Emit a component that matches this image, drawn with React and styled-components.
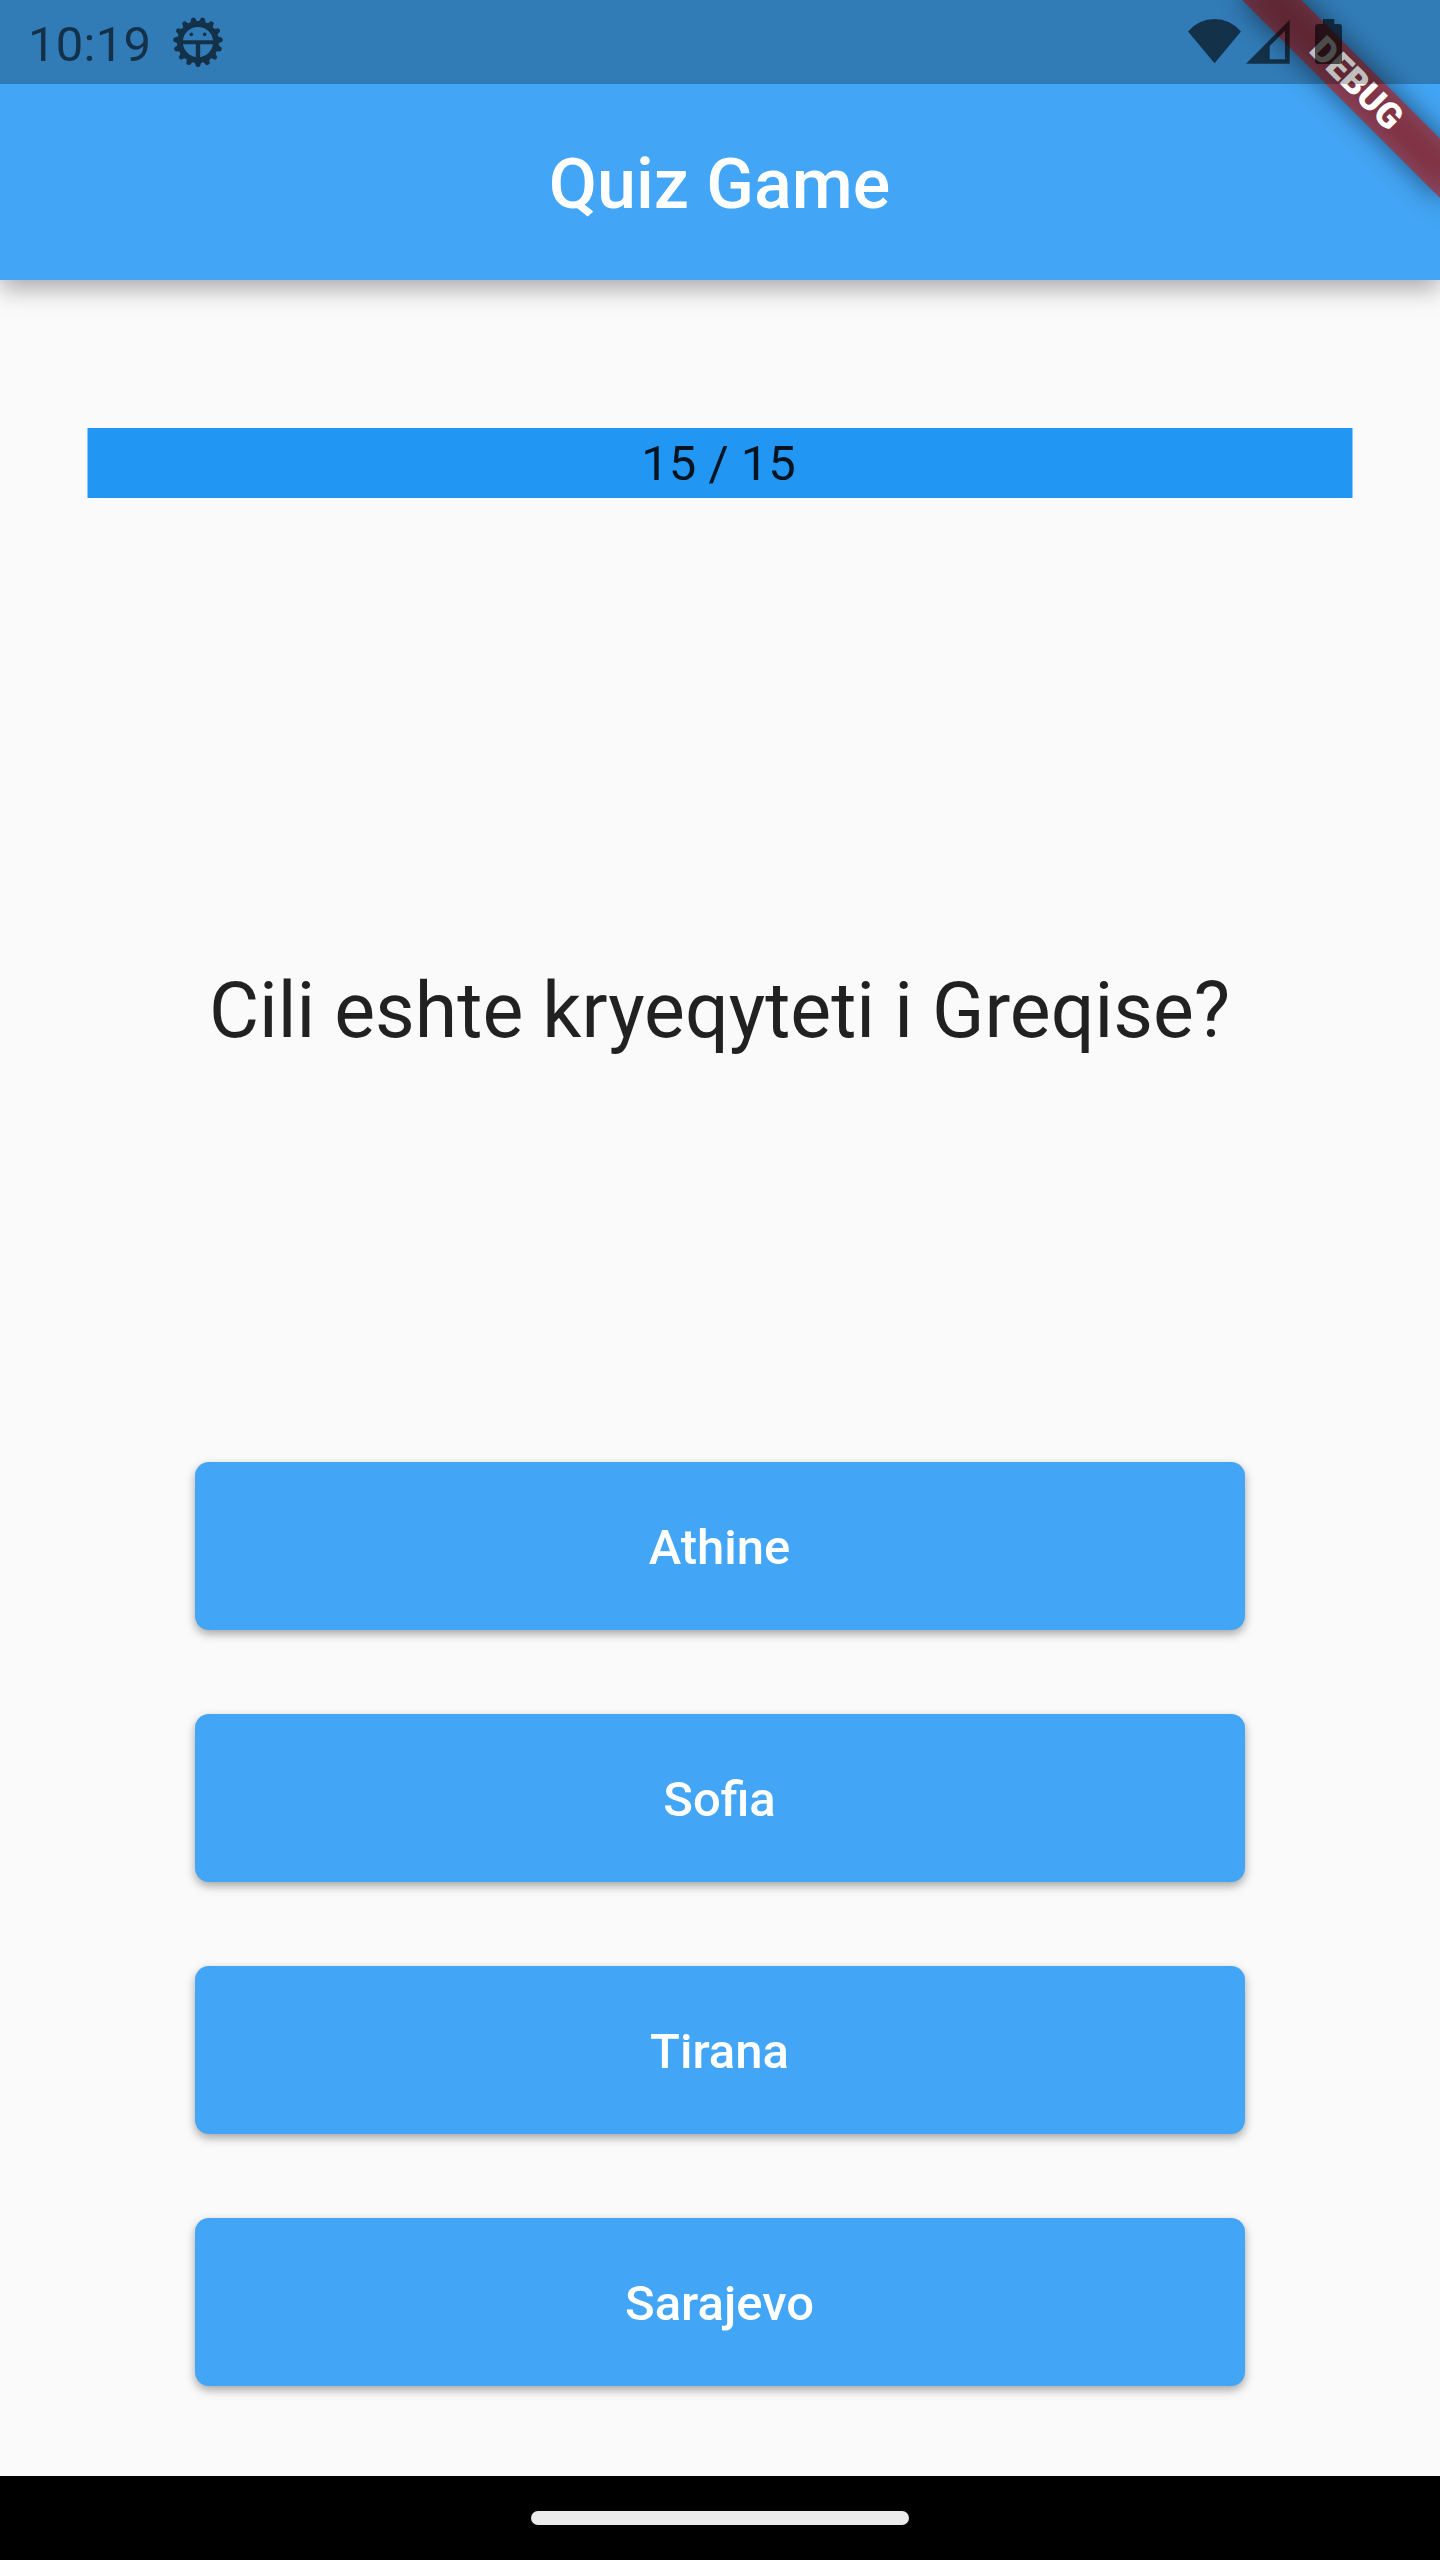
import React from 'react';
import styled, { createGlobalStyle } from 'styled-components';

const GlobalStyle = createGlobalStyle`
  * { box-sizing: border-box; }
  html, body { margin: 0; padding: 0; }
  body { background: #fafafa; font-family: Roboto, "Liberation Sans", sans-serif; }
`;

const Screen = styled.div`
  display: flex;
  flex-direction: column;
  width: 1440px;
  height: 2560px;
  overflow: hidden;
  background: #fafafa;
`;

const Header = styled.header`
  position: relative;
  flex: none;
  height: 280px;
  background: #42a5f5;
  box-shadow: 0 8px 24px rgba(0, 0, 0, 0.34);
`;

const StatusBar = styled.div`
  position: relative;
  z-index: 2;
  display: flex;
  align-items: flex-start;
  justify-content: space-between;
  height: 84px;
  padding: 0 98px 0 28px;
  background: rgba(0, 0, 0, 0.25);
`;

const StatusGroup = styled.div`
  display: flex;
  align-items: flex-start;
  gap: ${({ $gap }) => $gap}px;
  opacity: 0.6;
`;

const Clock = styled.span`
  width: 123px;
  padding-top: 16px;
  font-size: 49px;
  line-height: 57px;
  letter-spacing: 0.25px;
  white-space: nowrap;
  color: #000;
`;

const StatusIcon = styled.svg`
  display: block;
  margin-top: 16px;
`;

const TitleRow = styled.div`
  display: flex;
  align-items: center;
  justify-content: center;
  height: 196px;
  padding: 4px 1px 0 0;
`;

const Title = styled.h1`
  margin: 0;
  font-size: 70px;
  font-weight: 500;
  line-height: 82px;
  color: #fff;
`;

const BannerClip = styled.div`
  position: absolute;
  inset: 0;
  z-index: 1;
  overflow: hidden;
`;

const Banner = styled.div`
  position: absolute;
  top: 98px;
  right: -140px;
  width: 280px;
  height: 42px;
  transform-origin: 140px -98px;
  transform: rotate(45deg);

  &::before {
    content: '';
    position: absolute;
    inset: 0;
    background: rgba(0, 0, 0, 0.5);
    filter: blur(13.9px);
  }
`;

const BannerLabel = styled.div`
  position: relative;
  height: 42px;
  background: rgba(183, 28, 28, 0.627);
  color: #fff;
  font-size: 35.7px;
  font-weight: 900;
  line-height: 40px;
  text-align: center;
`;

const Main = styled.main`
  flex: 1;
  display: flex;
  flex-direction: column;
  align-items: center;
  padding-top: 148px;
`;

const Progress = styled.div`
  width: 1266px;
  height: 70px;
  padding-right: 3px;
  border: solid rgba(33, 150, 243, 0.5);
  border-width: 0 1px;
  background: #2196f3;
  background-clip: padding-box;
  color: rgba(0, 0, 0, 0.87);
  font-size: 49px;
  line-height: 72px;
  text-align: center;
`;

const Question = styled.p`
  margin: 468px 0 0;
  padding-right: 1px;
  font-size: 77px;
  line-height: 90px;
  color: rgba(0, 0, 0, 0.87);
  white-space: nowrap;
`;

const Answers = styled.div`
  display: flex;
  flex-direction: column;
  gap: 84px;
  margin-top: 406px;
`;

const Answer = styled.button`
  width: 1050px;
  height: 168px;
  padding: 2px 1px 0 0;
  border: 0;
  border-radius: 14px;
  background: #42a5f5;
  box-shadow: 0 4px 10px rgba(0, 0, 0, 0.34);
  color: #fff;
  font-family: inherit;
  font-size: 49px;
  font-weight: 500;
  line-height: 57px;
`;

const NavBar = styled.nav`
  flex: none;
  display: flex;
  align-items: center;
  justify-content: center;
  height: 84px;
  background: #000;
`;

const HomeHandle = styled.div`
  width: 378px;
  height: 14px;
  border-radius: 7px;
  background: #ebebeb;
`;

const TEETH = Array.from({ length: 15 }, (_, i) => i * 24);

function BugIcon() {
  return (
    <StatusIcon width="52" height="52" viewBox="-26 -26 52 52">
      <circle r="18" fill="none" stroke="#000" strokeWidth="5.8" />
      {TEETH.map((angle) => (
        <path
          key={angle}
          d="M-5 19.3Q-2.8 20.5 -2.5 22.4A2.5 2.5 0 0 0 2.5 22.4Q2.8 20.5 5 19.3Z"
          transform={`rotate(${angle})`}
        />
      ))}
      <path d="M-17-1.8H17V2.3H2.2V17H-2.2V2.3H-17Z" />
      <circle cx="-6.7" cy="-7.6" r="1.8" />
      <circle cx="6.7" cy="-7.6" r="1.8" />
    </StatusIcon>
  );
}

function WifiIcon() {
  return (
    <StatusIcon width="54" height="50" viewBox="0 0 54 50">
      <path d="M0 15.5A34.3 34.3 0 0 1 53 15.5L26.5 47.3Z" />
    </StatusIcon>
  );
}

function SignalIcon() {
  return (
    <StatusIcon width="44" height="50" viewBox="0.3 0 44 50">
      <path fillRule="evenodd" d="M0.3 47.7L44 3.7V47.7ZM24 30V43.3H39.3V14.7Z" />
    </StatusIcon>
  );
}

const BatterySvg = styled(StatusIcon)`
  margin-left: 21px;
`;

function BatteryIcon() {
  return (
    <BatterySvg width="27" height="50" viewBox="0 0 27 50">
      <path d="M8 3H19.3V8H24A3 3 0 0 1 27 11V45A3 3 0 0 1 24 48H3A3 3 0 0 1 0 45V11A3 3 0 0 1 3 8H8Z" />
    </BatterySvg>
  );
}

const ANSWERS = ['Athine', 'Sofia', 'Tirana', 'Sarajevo'];

export default function App() {
  return (
    <>
      <GlobalStyle />
      <Screen>
        <Header>
          <StatusBar>
            <StatusGroup $gap={21}>
              <Clock>10:19</Clock>
              <BugIcon />
            </StatusGroup>
            <StatusGroup $gap={4}>
              <WifiIcon />
              <SignalIcon />
              <BatteryIcon />
            </StatusGroup>
          </StatusBar>
          <TitleRow>
            <Title>Quiz Game</Title>
          </TitleRow>
          <BannerClip>
            <Banner>
              <BannerLabel>DEBUG</BannerLabel>
            </Banner>
          </BannerClip>
        </Header>
        <Main>
          <Progress>15 / 15</Progress>
          <Question>Cili eshte kryeqyteti i Greqise?</Question>
          <Answers>
            {ANSWERS.map((answer) => (
              <Answer key={answer}>{answer}</Answer>
            ))}
          </Answers>
        </Main>
        <NavBar>
          <HomeHandle />
        </NavBar>
      </Screen>
    </>
  );
}
